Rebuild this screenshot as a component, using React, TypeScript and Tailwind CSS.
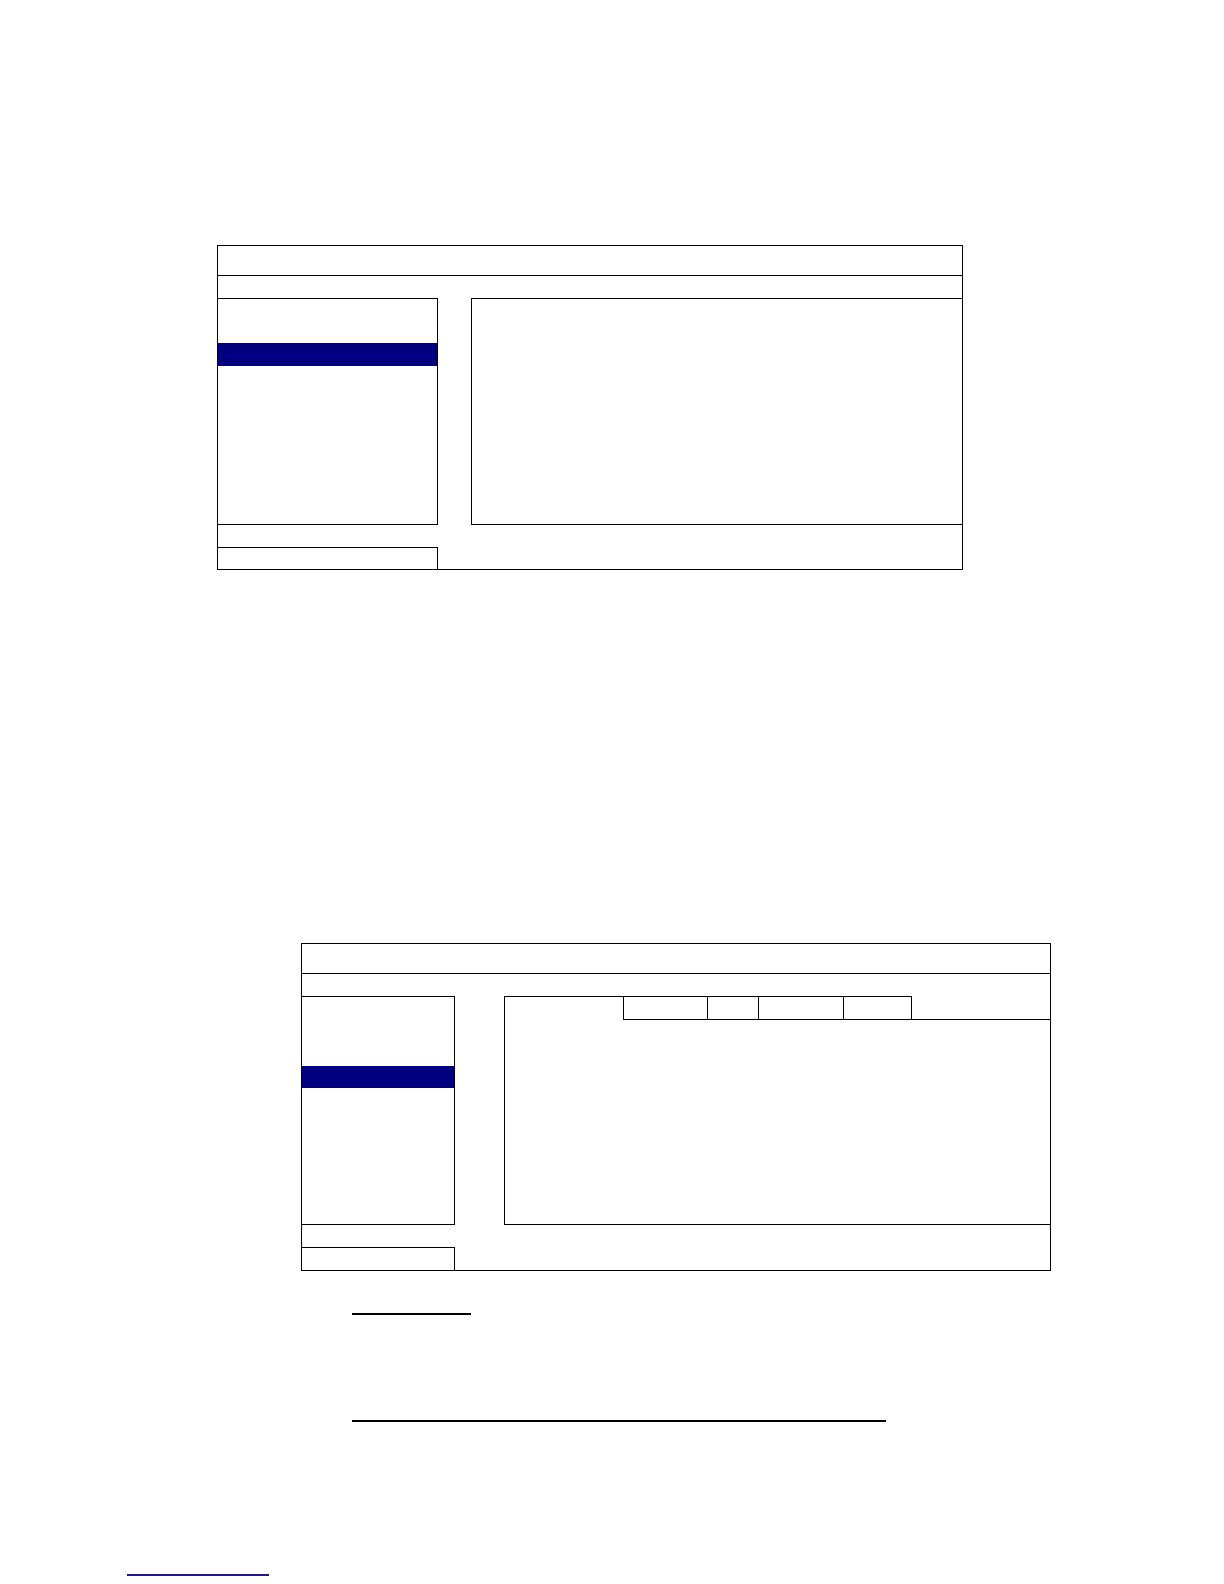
export default function App() {
  return (
    <div className="w-[1224px] h-[1584px] bg-white flex flex-col" style={{ fontFamily: '"Liberation Sans", Arial, sans-serif' }}>
      {/* Top panel */}
      <div className="mt-[245px] ml-[217px] w-[746px] h-[325px] border border-black flex flex-col">
        <div className="h-[30px] border-b border-black shrink-0" />
        <div className="h-[22px] shrink-0" />
        <div className="flex h-[227px] shrink-0">
          <div className="w-[220px] h-full border-t border-r border-b border-black flex flex-col">
            <div className="h-[44px]" />
            <div className="h-[23px] bg-[#000080]" />
          </div>
          <div className="w-[33px]" />
          <div className="flex-1 h-full border-t border-l border-b border-black" />
        </div>
        <div className="h-[22px] shrink-0" />
        <div className="w-[220px] flex-1 border-t border-r border-black" />
      </div>

      {/* Second panel */}
      <div className="mt-[373px] ml-[301px] w-[750px] h-[328px] border border-black flex flex-col">
        <div className="h-[30px] border-b border-black shrink-0" />
        <div className="h-[22px] shrink-0" />
        <div className="flex h-[229px] shrink-0">
          <div className="w-[153px] h-full border-t border-r border-b border-black flex flex-col">
            <div className="h-[69px]" />
            <div className="h-[22px] bg-[#000080]" />
          </div>
          <div className="w-[49px]" />
          <div className="flex-1 h-full border-l border-b border-black flex flex-col">
            <div className="flex h-[24px]">
              <div className="w-[118px] border-t border-black" />
              <div className="w-[84px] border-t border-b border-l border-black" />
              <div className="w-[51px] border-t border-b border-l border-black" />
              <div className="w-[85px] border-t border-b border-l border-black" />
              <div className="w-[69px] border-t border-b border-l border-r border-black" />
              <div className="flex-1 border-b border-black" />
            </div>
          </div>
        </div>
        <div className="h-[22px] shrink-0" />
        <div className="w-[153px] flex-1 border-t border-r border-black" />
      </div>

      {/* Underlines */}
      <div className="mt-[42px] ml-[352px] w-[119px] h-[2px] bg-black" />
      <div className="mt-[105px] ml-[352px] w-[534px] h-[2px] bg-black" />
      <div className="mt-[152px] ml-[127px] w-[142px] h-[2px] bg-[#1a1a8e]" />
    </div>
  );
}
